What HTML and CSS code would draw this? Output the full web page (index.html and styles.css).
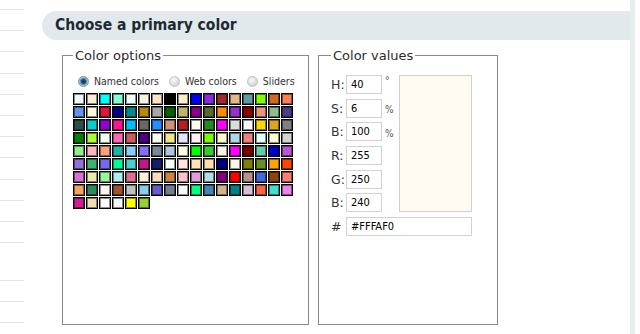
FILE: index.html
```html
<!DOCTYPE html>
<html lang="en">
<head>
  <meta charset="UTF-8">
  <title>Choose a primary color</title>
  <link rel="stylesheet" href="styles.css">
</head>
<body>
  <ul class="sidebar">
    <li></li><li></li><li></li><li></li><li></li><li></li><li></li><li></li>
    <li></li><li></li><li></li><li class="tall"></li><li></li><li></li><li></li>
  </ul>

  <div class="content">
    <h2 class="title">Choose a primary color</h2>

    <div class="panels">
      <fieldset class="options">
        <legend>Color options</legend>
        <div class="modes">
          <label><span class="radio checked"></span>Named colors</label>
          <label><span class="radio"></span>Web colors</label>
          <label><span class="radio"></span>Sliders</label>
        </div>
        <div class="swatches" id="swatches"></div>
      </fieldset>

      <fieldset class="values">
        <legend>Color values</legend>
        <div class="value-grid">
          <div class="row"><span class="lbl">H:</span><input type="text" value="40"><span class="unit deg">&deg;</span></div>
          <div class="row"><span class="lbl">S:</span><input type="text" value="6"><span class="unit">%</span></div>
          <div class="row"><span class="lbl">B:</span><input type="text" value="100"><span class="unit">%</span></div>
          <div class="row"><span class="lbl">R:</span><input type="text" value="255"></div>
          <div class="row"><span class="lbl">G:</span><input type="text" value="250"></div>
          <div class="row"><span class="lbl">B:</span><input type="text" value="240"></div>
          <div class="preview"></div>
          <div class="row hex"><span class="lbl">#</span><input type="text" value="#FFFAF0"></div>
        </div>
      </fieldset>
    </div>
  </div>

  <div class="rail"></div>

  <script>
    // named colours, alphabetical, same order as the picker
    const colors = `aliceblue antiquewhite aqua aquamarine azure beige bisque black blanchedalmond blue blueviolet brown burlywood cadetblue chartreuse chocolate coral
      cornflowerblue cornsilk crimson darkblue darkcyan darkgoldenrod darkgray darkgreen darkkhaki darkmagenta darkolivegreen darkorange darkorchid darkred darksalmon darkseagreen darkslateblue
      darkslategray darkturquoise darkviolet deeppink deepskyblue dimgray dodgerblue #d19275 firebrick floralwhite forestgreen fuchsia gainsboro ghostwhite gold goldenrod gray
      green greenyellow honeydew hotpink indianred indigo ivory khaki lavender lavenderblush lawngreen lemonchiffon lightblue lightcoral lightcyan lightgoldenrodyellow lightgrey
      lightgreen lightpink lightsalmon lightseagreen lightskyblue #8470ff lightslategray lightsteelblue lightyellow lime limegreen linen magenta maroon mediumaquamarine mediumblue mediumorchid
      mediumpurple mediumseagreen mediumslateblue mediumspringgreen mediumturquoise mediumvioletred midnightblue mintcream mistyrose moccasin navajowhite navy oldlace olive olivedrab orange orangered
      orchid palegoldenrod palegreen paleturquoise palevioletred papayawhip peachpuff peru pink plum powderblue purple red rosybrown royalblue saddlebrown salmon
      sandybrown seagreen seashell sienna silver skyblue slateblue slategray snow springgreen steelblue tan teal thistle tomato turquoise violet
      #d02090 wheat white whitesmoke yellow yellowgreen`.trim().split(/\s+/)

    const swatches = document.getElementById('swatches')
    swatches.innerHTML = colors.map(c => `<span class="swatch" title="${c}" style="background:${c}"></span>`).join('')
  </script>
</body>
</html>
```

FILE: styles.css
```css
body {
  margin: 0;
  height: 334px;
  display: flex;
  font-family: "DejaVu Sans Condensed", "DejaVu Sans", sans-serif;
  color: #333;
  background: #fff;
  overflow: hidden;
}

/* left menu stub */
.sidebar {
  list-style: none;
  margin: 0;
  padding: 9px 0 0;
  width: 24px;
}
.sidebar li {
  height: 20.2px;
  border-top: 1px solid #e4e4e4;
}
.sidebar li.tall {
  height: 36.6px;
}

.content {
  flex: 1;
  padding-left: 18px;
}

.rail {
  width: 5px;
  margin-right: 5px;
  background: #e5edef;
}

.title {
  margin: 11px 0 0;
  height: 29px;
  line-height: 29px;
  padding-left: 13px;
  background: #e2e9ec;
  border-radius: 15px 0 0 15px;
  font-size: 15.5px;
  font-weight: bold;
  color: #1d2a31;
}

.panels {
  display: flex;
  gap: 9px;
  padding-left: 20px;
  margin-top: 8px;
}

fieldset {
  margin: 0;
  min-width: 0;
  box-sizing: border-box;
  border: 1px solid #8a8a8a;
  height: 277px;
}
legend {
  font-family: "DejaVu Sans", sans-serif;
  font-size: 13px;
  padding: 0 2px;
  color: #2b2b2b;
}

.options {
  width: 247px;
  padding: 12px 0 0 10px;
}

.modes {
  display: flex;
  gap: 10px;
  padding-left: 5px;
  font-size: 10.5px;
  color: #333;
}
.modes label {
  display: flex;
  align-items: center;
  gap: 5px;
}

.radio {
  width: 9px;
  height: 9px;
  border-radius: 50%;
  border: 1px solid #c2c2c2;
  background: radial-gradient(circle at 40% 35%, #fafafa, #d6d6d6 70%, #bdbdbd);
}
.radio.checked {
  border-color: #7d95a8;
  background: radial-gradient(circle at 50% 50%, #0b3556 0, #1d5a86 35%, #9db6c9 60%, #e3ebf1 100%);
}

.swatches {
  display: grid;
  grid-template-columns: repeat(17, 12px);
  grid-auto-rows: 12px;
  gap: 1px;
  margin-top: 6px;
}
.swatch {
  box-sizing: border-box;
  border: 1px solid #000;
  box-shadow: inset 0 0 0 1px rgba(0, 0, 0, 0.45);
}

.values {
  width: 180px;
  padding: 12px 0 0 12px;
}

.value-grid {
  display: grid;
  grid-template-columns: 68px 73px;
  grid-auto-rows: 19px;
  row-gap: 4.67px;
}
.row {
  grid-column: 1;
  display: flex;
  align-items: center;
}
.row.hex {
  grid-column: 1 / 3;
}
.lbl {
  width: 15px;
  font-family: "DejaVu Sans", sans-serif;
  font-size: 12.5px;
  color: #333;
}
.row input {
  box-sizing: border-box;
  width: 36px;
  height: 19px;
  margin: 0;
  padding: 0 4px;
  border: 1px solid #d2d2d2;
  font-family: inherit;
  font-size: 11px;
  color: #000;
}
.row.hex input {
  width: 126px;
}
.unit {
  margin-left: 3px;
  font-size: 10px;
  color: #555;
  padding-top: 3px;
}
.unit.deg {
  align-self: flex-start;
  padding-top: 0;
}

.preview {
  grid-column: 2;
  grid-row: 1 / 7;
  background: #fffaf0;
  border: 1px solid #d0d0d0;
}
```
